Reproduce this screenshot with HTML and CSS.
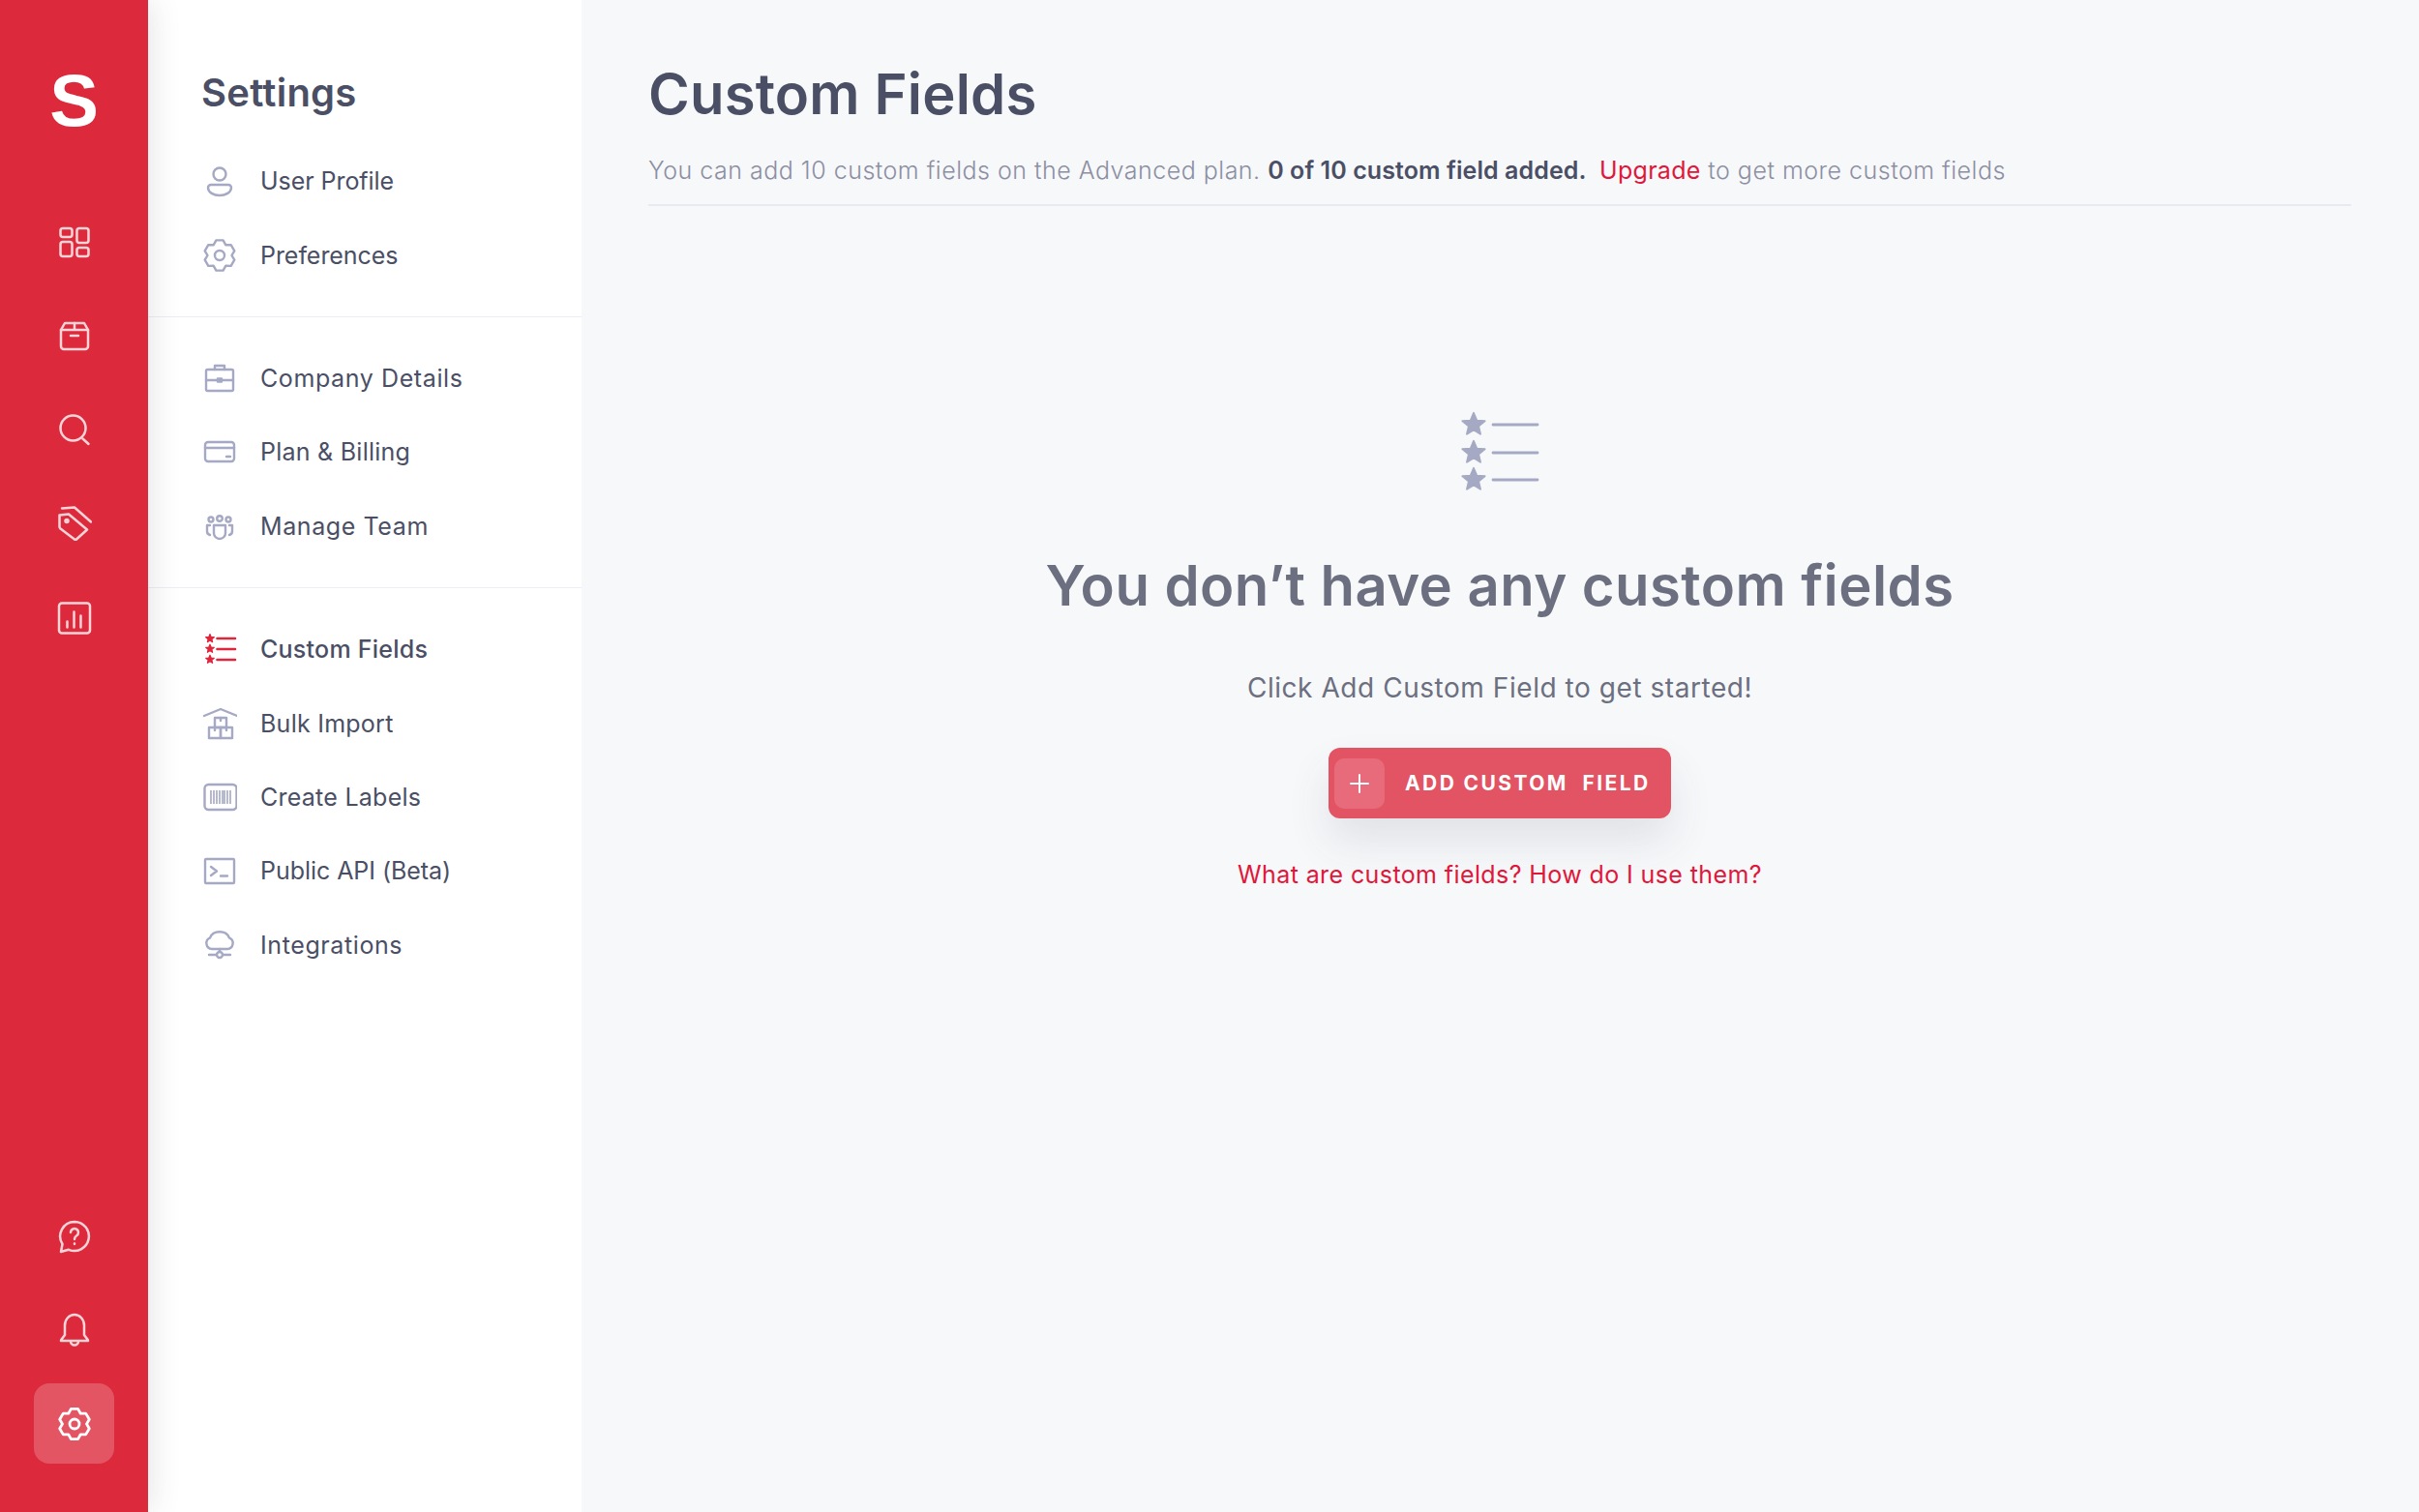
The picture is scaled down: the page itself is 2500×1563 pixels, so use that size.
FILE: index.html
```html
<!DOCTYPE html>
<html lang="en">
<head>
    <meta charset="UTF-8">
    <meta name="viewport" content="width=device-width, initial-scale=1.0">
    <title>Custom Fields</title>
    <link rel="stylesheet" href="styles.css">
</head>
<body>
    <aside class="rail">
        <div class="logo">S</div>

        <div class="rail-group">
            <a class="rail-item"><svg viewBox="0 0 36 36"><rect x="3.5" y="4" width="12" height="9" rx="2.5"/><rect x="3.5" y="18" width="12" height="15" rx="2.5"/><rect x="20.5" y="4" width="12" height="15" rx="2.5"/><rect x="20.5" y="24" width="12" height="9" rx="2.5"/></svg></a>
            <a class="rail-item"><svg viewBox="0 0 36 36"><path d="M4 12 L8 5 H28 L32 12 V29 a3 3 0 0 1 -3 3 H7 a3 3 0 0 1 -3 -3 Z"/><path d="M4 12 H32 M18 5 V12 M14 18 H22"/></svg></a>
            <a class="rail-item"><svg viewBox="0 0 36 36"><circle cx="16.5" cy="16.5" r="13"/><path d="M26.5 27.5 L32.5 33"/></svg></a>
            <a class="rail-item"><svg viewBox="0 0 36 36"><path d="M2.5 9.5 L12 8.5 L31 24.5 L20 34.5 Q19 35.5 18 34.5 L3.5 23.5 Q2.5 22.5 2.5 21.5 Z"/><path d="M5 2.5 L18 1.5 L35 16.5"/><circle cx="10" cy="15.5" r="1.5"/></svg></a>
            <a class="rail-item"><svg viewBox="0 0 36 36"><rect x="2" y="3.5" width="32" height="31" rx="3"/><path d="M10.5 24.5 V30.5 M17.5 14.5 V30.5 M24.5 18.5 V30.5" transform="translate(0 -2)"/></svg></a>
        </div>

        <div class="rail-group rail-bottom">
            <a class="rail-item"><svg viewBox="0 0 36 36"><path d="M18 3 a15 15 0 1 1 -6 28.8 L4 34 L5.5 26 A15 15 0 0 1 18 3 Z"/><path d="M14 14 a4 4 0 1 1 6 3.5 c-1.5 .9 -2 1.8 -2 3.5 M18 25.5 V26"/></svg></a>
            <a class="rail-item"><svg viewBox="0 0 36 36"><path d="M4 29 Q4 28 5 27 L8 23 V13 a10 11 0 0 1 20 0 V23 L31 27 Q32 28 32 29 Z"/><path d="M14 29.5 a4 4 0 0 0 8 0"/></svg></a>
            <a class="rail-item active"><svg viewBox="0 0 36 36"><path d="M14.4 2.4 H21.6 L24.25 7.2 L29.7 7.1 L33.3 13.3 L30.5 18 L33.3 22.7 L29.7 28.9 L24.25 28.8 L21.6 33.6 H14.4 L11.75 28.8 L6.3 28.9 L2.7 22.7 L5.5 18 L2.7 13.3 L6.3 7.1 L11.75 7.2 Z"/><circle cx="18" cy="18" r="5"/></svg></a>
        </div>
    </aside>

    <nav class="sidebar">
        <h2>Settings</h2>

        <ul class="nav-group">
            <li><svg viewBox="0 0 36 36"><circle cx="18" cy="11" r="6.5"/><path d="M9 22 H27 a3 3 0 0 1 3 3 c0 5 -6 8 -12 8 s-12 -3 -12 -8 a3 3 0 0 1 3 -3 Z"/></svg><span class="tight">User Profile</span></li>
            <li><svg viewBox="0 0 36 36"><path d="M14.4 2.4 H21.6 L24.25 7.2 L29.7 7.1 L33.3 13.3 L30.5 18 L33.3 22.7 L29.7 28.9 L24.25 28.8 L21.6 33.6 H14.4 L11.75 28.8 L6.3 28.9 L2.7 22.7 L5.5 18 L2.7 13.3 L6.3 7.1 L11.75 7.2 Z"/><circle cx="18" cy="18" r="5"/></svg><span class="tight">Preferences</span></li>
        </ul>

        <ul class="nav-group">
            <li><svg viewBox="0 0 36 36"><rect x="4" y="9" width="28" height="22" rx="1.5"/><path d="M13 9 V5 H23 V9 M4 20 H32"/><rect x="16" y="18.5" width="4" height="3"/></svg><span class="wide">Company Details</span></li>
            <li><svg viewBox="0 0 36 36"><rect x="3" y="8" width="30" height="20" rx="3"/><path d="M3 14 H33 M25 23 H29"/></svg>Plan &amp; Billing</li>
            <li><svg viewBox="0 0 36 36"><circle cx="9" cy="11" r="2.5"/><circle cx="18" cy="10" r="2.8"/><circle cx="27" cy="11" r="2.5"/><path d="M12 17 H24 V25 a6 6 0 0 1 -12 0 Z M8 17 H5 V23 a4 4 0 0 0 3 4 M28 17 H31 V23 a4 4 0 0 1 -3 4"/></svg><span class="wide">Manage Team</span></li>
        </ul>

        <ul class="nav-group">
            <li class="current"><svg viewBox="0 0 36 36"><path class="star" d="M8 2.6 l1.2 2.9 3.1 .2 -2.4 2 .7 3 -2.6 -1.6 -2.6 1.6 .7 -3 -2.4 -2 3.1 -.2 Z"/><path class="star" d="M8 13.2 l1.2 2.9 3.1 .2 -2.4 2 .7 3 -2.6 -1.6 -2.6 1.6 .7 -3 -2.4 -2 3.1 -.2 Z"/><path class="star" d="M8 24.2 l1.2 2.9 3.1 .2 -2.4 2 .7 3 -2.6 -1.6 -2.6 1.6 .7 -3 -2.4 -2 3.1 -.2 Z"/><path d="M15.5 7 H34 M15.5 18 H34 M15.5 29 H34"/></svg>Custom Fields</li>
            <li><svg viewBox="0 0 36 36"><path d="M2 10 L19 3 L36 10"/><rect x="13" y="12" width="12" height="10"/><rect x="7" y="22" width="12" height="11"/><rect x="19" y="22" width="12" height="11"/><path d="M19 12 V15 M13 22 V25 M25 22 V25"/></svg>Bulk Import</li>
            <li><svg viewBox="0 0 36 36"><rect x="2.5" y="5" width="33" height="26" rx="4"/><path class="bars" d="M9 11 V25 M12 11 V25 M15 11 V25 M18 11 V25 M21 11 V25 M23 11 V25 M26 11 V25 M29 11 V25"/></svg>Create Labels</li>
            <li><svg viewBox="0 0 36 36"><rect x="3" y="6" width="30" height="25" rx="1"/><path d="M9 14 L15 18.5 L9 23 M19 23.5 H26"/></svg><span class="tight">Public API (Beta)</span></li>
            <li><svg viewBox="0 0 36 36"><path d="M10 22 a6 6 0 0 1 -2 -11.5 a10.5 9 0 0 1 20 0 a6 6 0 0 1 -2 11.5 Z"/><path d="M18 22 V25 M7 28 H15 M21 28 H29"/><circle cx="18" cy="28" r="3"/></svg><span class="wide">Integrations</span></li>
        </ul>
    </nav>

    <main class="main">
        <header class="page-head">
            <h1>Custom Fields</h1>
            <p>You can add 10 custom fields on the Advanced plan. <strong>0 of 10 custom field added.</strong> <a class="upgrade">Upgrade</a> to get more custom fields</p>
        </header>

        <section class="empty">
            <svg class="empty-icon" viewBox="0 0 84 90">
                <path class="star" transform="translate(15 16) scale(2.7)" d="M0 -4.5 l1.2 2.9 3.1 .2 -2.4 2 .7 3 -2.6 -1.6 -2.6 1.6 .7 -3 -2.4 -2 3.1 -.2 Z"/>
                <path class="star" transform="translate(15 45) scale(2.7)" d="M0 -4.5 l1.2 2.9 3.1 .2 -2.4 2 .7 3 -2.6 -1.6 -2.6 1.6 .7 -3 -2.4 -2 3.1 -.2 Z"/>
                <path class="star" transform="translate(15 73) scale(2.7)" d="M0 -4.5 l1.2 2.9 3.1 .2 -2.4 2 .7 3 -2.6 -1.6 -2.6 1.6 .7 -3 -2.4 -2 3.1 -.2 Z"/>
                <path d="M35 16 H81 M35 45 H81 M35 73 H81"/>
            </svg>
            <h3>You don’t have any custom fields</h3>
            <p class="hint">Click Add Custom Field to get started!</p>
            <button class="add-btn">
                <span class="plus"><svg viewBox="0 0 24 24"><path d="M12 3 V21 M3 12 H21"/></svg></span>
                <span>ADD CUSTOM&nbsp; FIELD</span>
            </button>
            <a class="help-link">What are custom fields? How do I use them?</a>
        </section>
    </main>
</body>
</html>
```

FILE: styles.css
```css
* {
    box-sizing: border-box;
}

html, body {
    height: 100%;
}

body {
    margin: 0;
    display: flex;
    min-height: 1563px;
    font-family: Inter, "Noto Sans", sans-serif;
    color: #4a4f65;
    background-color: #f7f8fa;
}

svg {
    fill: none;
    stroke-linecap: round;
    stroke-linejoin: round;
    flex: none;
}

/* red icon rail */
.rail {
    width: 153px;
    flex: none;
    display: flex;
    flex-direction: column;
    align-items: center;
    padding-bottom: 50px;
    background-color: #dc2a3c;
    box-shadow: 0 0 32px rgba(60, 60, 80, 0.16);
    position: relative;
    z-index: 2;
}

.logo {
    height: 208px;
    padding-top: 58px;
    font-family: "Liberation Sans", sans-serif;
    font-size: 76px;
    font-weight: 700;
    line-height: 92px;
    color: #fff;
}

.rail-group {
    display: flex;
    flex-direction: column;
    gap: 14px;
}

.rail-bottom {
    margin-top: auto;
}

.rail-item {
    width: 83px;
    height: 83px;
    display: flex;
    align-items: center;
    justify-content: center;
    border-radius: 16px;
}

.rail-item svg {
    width: 36px;
    height: 36px;
    stroke: #f8d4d8;
    stroke-width: 2.5;
}

.rail-item.active {
    background-color: #e45563;
}

.rail-item.active svg {
    stroke: #fff;
    stroke-width: 2.8;
}

/* settings sidebar */
.sidebar {
    width: 448px;
    flex: none;
    background-color: #fff;
}

.sidebar h2 {
    margin: 0;
    height: 149px;
    padding: 73px 0 0 55px;
    font-size: 40px;
    font-weight: 600;
    line-height: 46px;
    letter-spacing: 0.25px;
}

.nav-group {
    list-style: none;
    margin: 0;
    padding: 25px 0;
    border-bottom: 1px solid #edeef5;
}

.sidebar h2 + .nav-group {
    padding-top: 0;
}

.nav-group:last-child {
    border-bottom: none;
}

.nav-group li {
    height: 76.4px;
    display: flex;
    align-items: center;
    gap: 24px;
    padding-left: 56px;
    font-size: 25px;
    letter-spacing: 0.25px;
    white-space: nowrap;
}

.nav-group .tight {
    letter-spacing: -0.05px;
}

.nav-group .wide {
    letter-spacing: 0.6px;
}

.nav-group svg {
    width: 36px;
    height: 36px;
    stroke: #a5a9c3;
    stroke-width: 2.4;
}

.nav-group .bars {
    stroke-width: 1.6;
    stroke-linecap: butt;
}

.nav-group .current {
    font-weight: 500;
}

.nav-group .current svg {
    stroke: #e0263c;
    stroke-width: 2.6;
}

.nav-group .star {
    fill: #e0263c;
    stroke-width: 1.2;
}

/* main area */
.main {
    flex: 1;
    padding: 0 70px 0 69px;
}

.page-head {
    padding: 60px 0 17px;
    border-bottom: 2px solid #e9eaf1;
}

.page-head h1 {
    margin: 0;
    font-size: 58px;
    font-weight: 600;
    line-height: 74px;
    letter-spacing: 0.2px;
}

.page-head p {
    margin: 24px 0 0;
    font-size: 25px;
    font-weight: 300;
    line-height: 36px;
    letter-spacing: 0.5px;
    color: #8c8fa3;
}

.page-head strong {
    font-weight: 600;
    letter-spacing: 0.08px;
    color: #4a4f65;
}

.upgrade {
    margin-left: 6px;
    color: #e0173a;
    font-weight: 400;
    letter-spacing: 0.3px;
}

.empty {
    display: flex;
    flex-direction: column;
    align-items: center;
    padding-top: 210px;
}

.empty-icon {
    width: 84px;
    height: 90px;
    stroke: #a5a9c3;
    stroke-width: 2.8;
}

.empty-icon .star {
    fill: #a5a9c3;
    stroke: #a5a9c3;
    stroke-width: 0.7;
}

.empty h3 {
    margin: 54px 0 0;
    font-size: 58px;
    font-weight: 600;
    line-height: 76px;
    letter-spacing: 0.45px;
    color: #6c6f80;
}

.hint {
    margin: 48px 0 0;
    font-size: 28px;
    line-height: 40px;
    letter-spacing: 0.55px;
    color: #6c6f80;
}

.add-btn {
    margin-top: 42px;
    width: 354px;
    height: 73px;
    display: flex;
    align-items: center;
    gap: 21px;
    padding: 0 0 0 6px;
    border: none;
    border-radius: 12px;
    font-family: inherit;
    font-size: 21px;
    font-weight: 700;
    letter-spacing: 2.4px;
    color: #fff;
    background-color: #e25363;
    box-shadow: 0 24px 44px rgba(70, 70, 90, 0.12);
    white-space: nowrap;
}

.plus {
    width: 52px;
    height: 52px;
    display: flex;
    align-items: center;
    justify-content: center;
    border-radius: 10px;
    background-color: #e76b7a;
}

.plus svg {
    width: 24px;
    height: 24px;
    stroke: #fff;
    stroke-width: 2;
}

.help-link {
    margin-top: 38px;
    font-size: 25px;
    line-height: 40px;
    letter-spacing: 0.4px;
    color: #e0173a;
}
```
